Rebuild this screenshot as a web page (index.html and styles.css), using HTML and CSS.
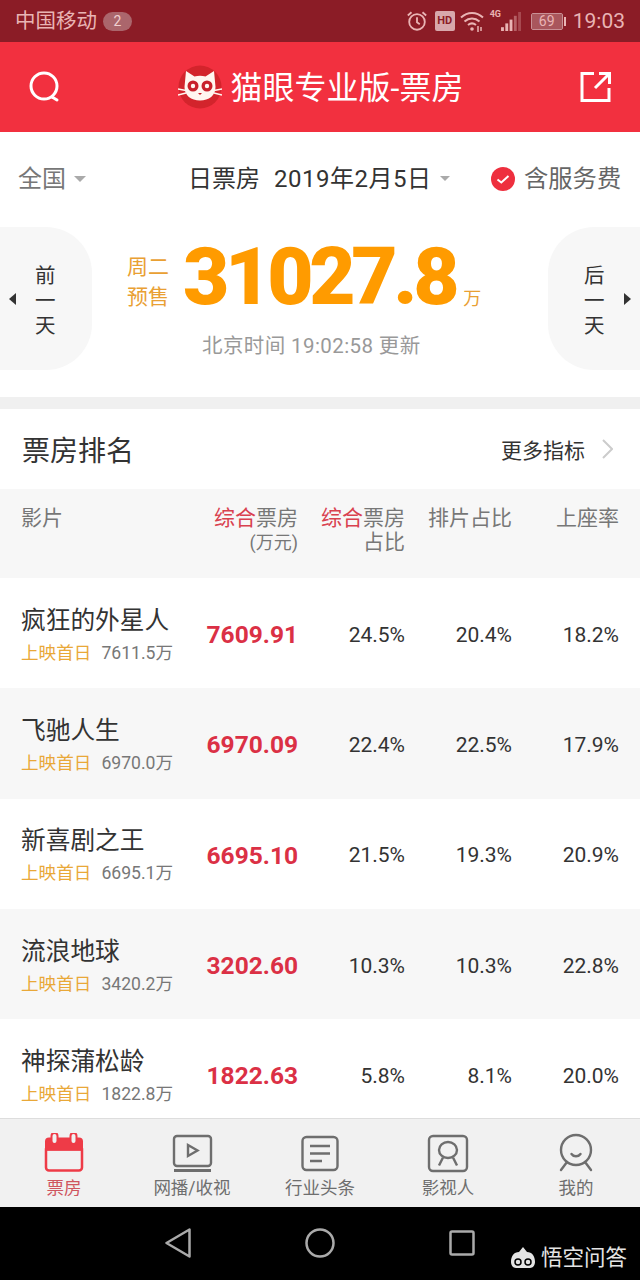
FILE: index.html
```html
<!DOCTYPE html>
<html lang="zh">
<head>
<meta charset="utf-8">
<title>猫眼专业版-票房</title>
<link rel="stylesheet" href="styles.css">
</head>
<body>
<div class="app">
  <div class="status">
    <span class="carrier">中国移动</span><span class="badge">2</span>
    <span class="spacer"></span>
    <svg class="st-alarm" viewBox="0 0 24 24" fill="none" stroke="currentColor" stroke-width="2"><circle cx="12" cy="13" r="8.500"/><path d="M12 8v5.500l3 2M2 6l4-3.500M22 6l-4-3.500"/></svg>
    <span class="hd">HD</span>
    <svg class="st-wifi" viewBox="0 0 26 22" fill="none" stroke="currentColor" stroke-width="2"><path d="M1 7.500c6.500-6 15.500-6 22 0M4.500 11.500c4.500-4 10.500-4 15 0M8 15c2.500-2 5.500-2 8 0"/><circle cx="12" cy="19" r="1.800" fill="currentColor" stroke="none"/><path d="M18 16v6M21 17v4" stroke-width="1.500"/></svg>
    <span class="st-net"><span class="fourg">4G</span><svg class="st-signal" viewBox="0 0 22 20" fill="currentColor"><rect x="0" y="16" width="3" height="4"/><rect x="4.500" y="12" width="3" height="8"/><rect x="9" y="8" width="3" height="12"/><rect x="13.500" y="4" width="3" height="16" opacity=".45"/><rect x="18" y="0" width="3" height="20" opacity=".3"/></svg></span>
    <span class="battery"><span class="battery-body">69</span><span class="battery-tip"></span></span>
    <span class="clock">19:03</span>
  </div>

  <header class="topbar">
    <svg class="tb-icon" viewBox="0 0 32 32" fill="none" stroke="#fff" stroke-width="3" stroke-linecap="round"><circle cx="15" cy="15" r="13"/><path d="M23 26l5 3"/></svg>
    <div class="brand">
      <svg class="logo" viewBox="0 0 44 44">
        <circle cx="22" cy="22" r="21.500" fill="#d3242c"/>
        <path d="M8 6l8.500 5.500c3.500-1 7.500-1 11 0L36 6l1.500 16c0 8.500-6.500 13.500-15.500 13.500S6.500 30.500 6.500 22z" fill="#fff6f0"/>
        <circle cx="15" cy="21" r="5.500" fill="#c8202a"/><circle cx="29" cy="21" r="5.500" fill="#c8202a"/>
        <circle cx="15" cy="21" r="2.200" fill="#fff6f0"/><circle cx="29" cy="21" r="2.200" fill="#fff6f0"/>
        <path d="M20 28h4l-2 2z" fill="#c8202a"/>
        <path d="M0 24l8 1.500M0 30l8-2M44 24l-8 1.500M44 30l-8-2" stroke="#fff6f0" stroke-width="1.300" fill="none"/>
      </svg>
      <h1 class="brand-name">猫眼专业版-票房</h1>
    </div>
    <svg class="tb-icon" viewBox="0 0 32 32" fill="none" stroke="#fff" stroke-width="3"><path d="M14 2.500H2v27h27V17M15 17L29 3M19 2.500h10.500V13"/></svg>
  </header>

  <div class="filters">
    <div class="f-group f-area"><span>全国</span><i class="caret"></i></div>
    <div class="f-group f-date"><span>日票房</span><span class="f-dateval">2019年2月5日</span><i class="caret caret-sm"></i></div>
    <div class="f-group f-fee">
      <svg class="check" viewBox="0 0 24 24"><circle cx="12" cy="12" r="12" fill="#ee2f3e"/><path d="M6.500 12.500l3.800 3 7.200-6.500" fill="none" stroke="#fff" stroke-width="2"/></svg>
      <span>含服务费</span>
    </div>
  </div>

  <section class="hero">
    <div class="day day-prev"><i class="tri tri-l"></i><span class="day-text">前<br>一<br>天</span></div>
    <div class="hero-main">
      <div class="hero-line">
        <span class="hero-tag">周二<br>预售</span>
        <span class="hero-num">31027.8</span>
        <span class="hero-unit">万</span>
      </div>
      <div class="hero-time">北京时间 19:02:58 更新</div>
    </div>
    <div class="day day-next"><span class="day-text">后<br>一<br>天</span><i class="tri tri-r"></i></div>
  </section>

  <div class="band"></div>

  <div class="section-head">
    <h2 class="section-title">票房排名</h2>
    <div class="more"><span>更多指标</span><svg class="chev" viewBox="0 0 11 20" fill="none" stroke="#ccc" stroke-width="2"><path d="M1 1l9 9-9 9"/></svg></div>
  </div>

  <div class="grid thead">
    <div class="th-left">影片</div>
    <div><em>综合</em>票房<br><small>(万元)</small></div>
    <div><em>综合</em>票房<br>占比</div>
    <div>排片占比</div>
    <div>上座率</div>
  </div>

  <div class="rows">
    <div class="grid row">
      <div class="film"><div class="film-name">疯狂的外星人</div><div class="film-sub"><span class="gold">上映首日</span><span>7611.5万</span></div></div>
      <div class="box">7609.91</div><div class="pct">24.5%</div><div class="pct">20.4%</div><div class="pct">18.2%</div>
    </div>
    <div class="grid row alt">
      <div class="film"><div class="film-name">飞驰人生</div><div class="film-sub"><span class="gold">上映首日</span><span>6970.0万</span></div></div>
      <div class="box">6970.09</div><div class="pct">22.4%</div><div class="pct">22.5%</div><div class="pct">17.9%</div>
    </div>
    <div class="grid row">
      <div class="film"><div class="film-name">新喜剧之王</div><div class="film-sub"><span class="gold">上映首日</span><span>6695.1万</span></div></div>
      <div class="box">6695.10</div><div class="pct">21.5%</div><div class="pct">19.3%</div><div class="pct">20.9%</div>
    </div>
    <div class="grid row alt">
      <div class="film"><div class="film-name">流浪地球</div><div class="film-sub"><span class="gold">上映首日</span><span>3420.2万</span></div></div>
      <div class="box">3202.60</div><div class="pct">10.3%</div><div class="pct">10.3%</div><div class="pct">22.8%</div>
    </div>
    <div class="grid row">
      <div class="film"><div class="film-name">神探蒲松龄</div><div class="film-sub"><span class="gold">上映首日</span><span>1822.8万</span></div></div>
      <div class="box">1822.63</div><div class="pct">5.8%</div><div class="pct">8.1%</div><div class="pct">20.0%</div>
    </div>
  </div>

  <nav class="tabs">
    <div class="tab active">
      <svg class="tab-icon" viewBox="0 1.500 42 42"><path d="M3 18h36v18a3 3 0 0 1-3 3H6a3 3 0 0 1-3-3z" fill="none" stroke="#ee3b47" stroke-width="2.500"/><path d="M2 19V10a4 4 0 0 1 4-4h30a4 4 0 0 1 4 4v9z" fill="#ee3b47"/><rect x="8.500" y="1.500" width="6" height="11" rx="3" fill="#f1f1f1" stroke="#ee3b47" stroke-width="2"/><rect x="27.500" y="1.500" width="6" height="11" rx="3" fill="#f1f1f1" stroke="#ee3b47" stroke-width="2"/></svg>
      <span>票房</span>
    </div>
    <div class="tab">
      <svg class="tab-icon" viewBox="0 0 42 42" fill="none" stroke="#6e6e6e" stroke-width="2.400"><rect x="3" y="3" width="37" height="30" rx="3"/><path d="M17 12l9.500 5.500-9.500 5.500z"/><path d="M3 37.500h37" stroke-width="2.800"/></svg>
      <span>网播/收视</span>
    </div>
    <div class="tab">
      <svg class="tab-icon" viewBox="0 0 42 42" fill="none" stroke="#6e6e6e" stroke-width="2.400"><rect x="3.500" y="4" width="35" height="33" rx="4"/><path d="M11 13h20M11 20.500h20M11 28h12"/></svg>
      <span>行业头条</span>
    </div>
    <div class="tab">
      <svg class="tab-icon" viewBox="0 0 42 42" fill="none" stroke="#6e6e6e" stroke-width="2.400"><rect x="2" y="3" width="38" height="35" rx="4"/><ellipse cx="21" cy="17" rx="9" ry="8"/><path d="M16 24.500L12 32.500M26 24.500L30 32.500"/></svg>
      <span>影视人</span>
    </div>
    <div class="tab">
      <svg class="tab-icon" viewBox="0 0 42 42" fill="none" stroke="#6e6e6e" stroke-width="2.400"><circle cx="21" cy="17" r="15"/><path d="M16.500 21c2 3 7 3 9 0M12 29l-6 8M30 29l6 8" stroke-linecap="round"/></svg>
      <span>我的</span>
    </div>
  </nav>

  <div class="navbar">
    <svg class="nav-back" viewBox="0 0 26 30" fill="none" stroke="#aaa" stroke-width="2.500" stroke-linejoin="round"><path d="M24.500 1.500v27L1.500 15z"/></svg>
    <svg class="nav-home" viewBox="0 0 30 30" fill="none" stroke="#aaa" stroke-width="2.500"><circle cx="15" cy="15" r="13.500"/></svg>
    <svg class="nav-recent" viewBox="0 0 26 26" fill="none" stroke="#aaa" stroke-width="2.500"><rect x="1.500" y="1.500" width="23" height="23" rx="1.500"/></svg>
    <div class="wukong">
      <svg class="wk-logo" viewBox="0 0 26 22"><path d="M13 0l4 5c5 0 8 4 8 10 0 3-2 6-5 6H6c-3 0-5-3-5-6 0-6 3-10 8-10z" fill="#e4e4e4"/><circle cx="8" cy="15" r="3" fill="none" stroke="#000" stroke-width="1.500"/><circle cx="18" cy="15" r="3" fill="none" stroke="#000" stroke-width="1.500"/></svg>
      <span>悟空问答</span>
    </div>
  </div>
</div>
</body>
</html>
```
FILE: styles.css
```css
* { box-sizing: border-box; }
html, body { margin: 0; padding: 0; }
body { background: #fff; font-family: Roboto, "Noto Sans CJK SC", sans-serif; color: #333; }
em, i { font-style: normal; }
h1, h2 { margin: 0; font-weight: 400; }

.app { width: 640px; height: 1280px; display: flex; flex-direction: column; overflow: hidden; }

/* status bar */
.status { height: 42px; flex: none; display: flex; align-items: center; background: #8b1c26; color: #e9b4b4; padding: 0 15px; }
.carrier { font-size: 20.500px; line-height: 42px; }
.badge { margin-left: 6px; width: 29px; height: 19px; border-radius: 10px; background: #ab666c; color: #f0d0d0; font-size: 14px; line-height: 19px; text-align: center; }
.spacer { flex: 1; }
.st-alarm { width: 22px; height: 22px; margin-right: 1px; }
.hd { margin-left: 6px; width: 20px; height: 20px; border-radius: 2px; background: #d8a8ac; color: #8b1c26; font-size: 11px; font-weight: 700; line-height: 20px; text-align: center; }
.st-wifi { margin-left: 5px; width: 26px; height: 22px; }
.st-net { margin-left: 4px; display: flex; align-items: flex-end; position: relative; width: 32px; height: 20px; }
.fourg { position: absolute; left: 0; top: -2px; font-size: 9px; font-weight: 700; line-height: 10px; }
.st-signal { position: absolute; right: 0; bottom: 0; width: 21px; height: 19px; }
.battery { margin-left: 9px; display: flex; align-items: center; }
.battery-body { width: 32px; height: 17px; border: 1px solid #c99095; border-radius: 2px; font-size: 14px; line-height: 15px; text-align: center; background: #a9565c; background-clip: content-box; color: #e9b4b4; }
.battery-tip { margin-left: 1px; width: 2px; height: 9px; background: #e9b4b4; }
.clock { margin-left: 7px; font-size: 21px; line-height: 42px; }

/* top bar */
.topbar { height: 90px; flex: none; display: flex; align-items: center; justify-content: space-between; padding: 0 28px 0 29px; background: #f2303f; }
.tb-icon { width: 32px; height: 32px; }
.brand { display: flex; align-items: center; gap: 9px; }
.logo { width: 44px; height: 44px; }
.brand-name { font-size: 32px; line-height: 40px; color: #fff; padding-top: 2px; }

/* filters */
.filters { height: 93px; flex: none; display: flex; align-items: center; padding: 0 0 0 18px; font-size: 24px; line-height: 32px; white-space: nowrap; }
.f-group { display: flex; align-items: center; }
.f-area { width: 170px; color: #777; }
.f-date { width: 303px; color: #333; }
.f-dateval { margin-left: 14px; letter-spacing: .5px; }
.f-fee { color: #666; font-size: 24.300px; }
.caret { margin-left: 8px; width: 0; height: 0; border-left: 6px solid transparent; border-right: 6px solid transparent; border-top: 6px solid #aaa; }
.caret-sm { margin-left: 9px; border-left-width: 5.500px; border-right-width: 5.500px; border-top-width: 5px; }
.check { width: 24px; height: 24px; margin-right: 9px; }

/* hero */
.hero { height: 172px; flex: none; display: flex; justify-content: space-between; align-items: flex-start; padding-top: 2px; }
.day { width: 92px; height: 143px; background: #f7f7f7; display: flex; align-items: center; color: #333; }
.day-prev { border-radius: 0 46px 46px 0; padding-left: 9px; }
.day-next { border-radius: 46px 0 0 46px; padding-left: 36px; }
.day-text { font-size: 20.500px; line-height: 25px; padding-top: 6px; }
.tri { width: 0; height: 0; border-top: 6.500px solid transparent; border-bottom: 6.500px solid transparent; }
.tri-l { border-right: 7px solid #333; margin-right: 19px; }
.tri-r { border-left: 7px solid #333; margin-left: 19px; }
.hero-main { flex: 1; display: flex; flex-direction: column; align-items: flex-start; min-width: 0; padding-left: 35px; }
.hero-line { display: flex; align-items: flex-end; height: 100px; white-space: nowrap; }
.hero-tag { font-size: 21px; line-height: 30px; color: #e9a033; margin: 0 14px 15px 0; }
.hero-num { font-size: 80px; line-height: 92px; font-weight: 900; color: #ff9b00; letter-spacing: -4.300px; margin-bottom: 4px; }
.hero-unit { font-size: 18px; line-height: 24px; color: #e9a033; margin: 0 0 16px 8px; }
.hero-time { font-size: 20.500px; line-height: 28px; color: #999; margin: 5px 0 0 75px; letter-spacing: .4px; white-space: nowrap; }

.band { height: 12px; flex: none; background: #f0f0f0; }

/* section head */
.section-head { height: 80px; flex: none; display: flex; align-items: center; justify-content: space-between; padding: 0 27px 0 22px; }
.section-title { font-size: 28px; line-height: 40px; color: #333; margin-top: 6px; }
.more { display: flex; align-items: center; font-size: 21px; color: #333; gap: 17px; }
.chev { width: 11px; height: 20px; }

/* table */
.grid { display: grid; grid-template-columns: 185px 92px 107px 107px 107px; padding-left: 21px; }
.thead { height: 89px; flex: none; padding-top: 17px; background: #f7f7f7; font-size: 21px; line-height: 24px; color: #777; text-align: right; }
.thead em { color: #d9414f; }
.thead small { font-size: 18px; }
.th-left { text-align: left; }
.rows { flex: 1; min-height: 0; overflow: hidden; }
.row { height: 110.300px; align-items: center; text-align: right; }
.alt { background: #f7f7f7; }
.film { text-align: left; padding-top: 3px; }
.film-name { font-size: 24.700px; line-height: 34px; color: #333; white-space: nowrap; }
.film-sub { display: flex; gap: 10px; font-size: 17.600px; line-height: 26px; color: #777; white-space: nowrap; margin-top: 2px; }
.gold { color: #e9a838; }
.box { font-size: 24.500px; font-weight: 700; color: #db3045; padding-top: 3px; }
.pct { font-size: 21px; color: #333; padding-top: 3px; }

/* tabs */
.tabs { height: 89px; flex: none; display: grid; grid-template-columns: repeat(5, 1fr); background: #f1f1f1; border-top: 1px solid #ddd; }
.tab { display: flex; flex-direction: column; align-items: center; padding-top: 14px; font-size: 17.500px; line-height: 24px; color: #6e6e6e; }
.tab-icon { width: 42px; height: 42px; margin-bottom: 1px; }
.tab.active { color: #cf5560; }

/* nav bar */
.navbar { height: 73px; flex: none; position: relative; display: grid; grid-template-columns: repeat(3, 142px); padding: 0 107px; align-items: center; justify-items: center; background: #000; }
.nav-back { width: 26px; height: 30px; margin-bottom: 2px; }
.nav-home { width: 30px; height: 30px; margin-bottom: 2px; }
.nav-recent { width: 26px; height: 26px; margin-bottom: 2px; }
.wukong { position: absolute; left: 510px; top: 38px; display: flex; align-items: center; gap: 5px; color: #e4e4e4; font-size: 21.500px; line-height: 25px; white-space: nowrap; }
.wk-logo { width: 26px; height: 22px; }
```
